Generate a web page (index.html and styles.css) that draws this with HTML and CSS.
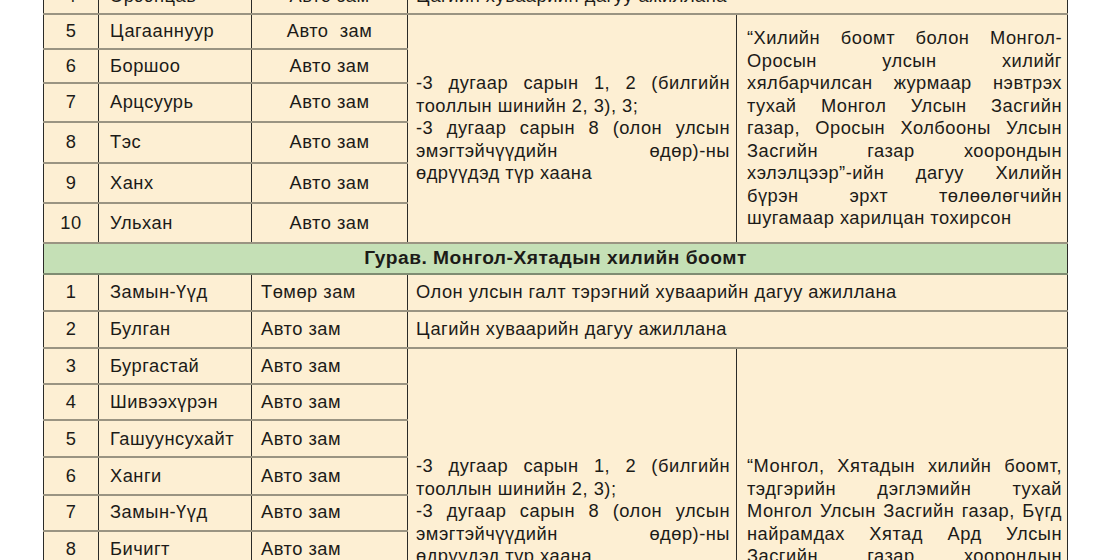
FILE: index.html
```html
<!DOCTYPE html>
<html lang="mn">
<head>
<meta charset="utf-8">
<title>Хилийн боомт</title>
<link rel="stylesheet" href="styles.css">
</head>
<body>
<div class="page">
<table class="ports">
  <colgroup>
    <col class="c-num">
    <col class="c-name">
    <col class="c-type">
    <col class="c-sched">
    <col class="c-basis">
  </colgroup>
  <tbody>
    <tr class="r35">
      <td class="num">4</td>
      <td class="name">Эрээнцав</td>
      <td class="type center">Авто зам</td>
      <td class="wide" colspan="2">Цагийн хуваарийн дагуу ажиллана</td>
    </tr>
    <tr class="r35">
      <td class="num">5</td>
      <td class="name">Цагааннуур</td>
      <td class="type center">Авто&nbsp; зам</td>
      <td class="sched" rowspan="6">
        <div class="just">-3 дугаар сарын 1, 2 (билгийн тооллын шинийн 2, 3), 3;<br>-3 дугаар сарын 8 (олон улсын эмэгтэйчүүдийн өдөр)-ны өдрүүдэд түр хаана</div>
      </td>
      <td class="basis" rowspan="6">
        <div class="just">“Хилийн боомт болон Монгол-Оросын улсын хилийг хялбарчилсан журмаар нэвтрэх тухай Монгол Улсын Засгийн газар, Оросын Холбооны Улсын Засгийн газар хоорондын хэлэлцээр”-ийн дагуу Хилийн бүрэн эрхт төлөөлөгчийн шугамаар харилцан тохирсон</div>
      </td>
    </tr>
    <tr class="r34">
      <td class="num">6</td>
      <td class="name">Боршоо</td>
      <td class="type center">Авто зам</td>
    </tr>
    <tr class="r39">
      <td class="num">7</td>
      <td class="name">Арцсуурь</td>
      <td class="type center">Авто зам</td>
    </tr>
    <tr class="r41">
      <td class="num">8</td>
      <td class="name">Тэс</td>
      <td class="type center">Авто зам</td>
    </tr>
    <tr class="r40">
      <td class="num">9</td>
      <td class="name">Ханх</td>
      <td class="type center">Авто зам</td>
    </tr>
    <tr class="r40">
      <td class="num">10</td>
      <td class="name">Ульхан</td>
      <td class="type center">Авто зам</td>
    </tr>
    <tr class="section">
      <td colspan="5">Гурав. Монгол-Хятадын хилийн боомт</td>
    </tr>
    <tr class="r37">
      <td class="num">1</td>
      <td class="name">Замын-Үүд</td>
      <td class="type">Төмөр зам</td>
      <td class="wide" colspan="2">Олон улсын галт тэрэгний хуваарийн дагуу ажиллана</td>
    </tr>
    <tr class="r37">
      <td class="num">2</td>
      <td class="name">Булган</td>
      <td class="type">Авто зам</td>
      <td class="wide" colspan="2">Цагийн хуваарийн дагуу ажиллана</td>
    </tr>
    <tr class="r36">
      <td class="num">3</td>
      <td class="name">Бургастай</td>
      <td class="type">Авто зам</td>
      <td class="sched low" rowspan="6">
        <div class="clip just">-3 дугаар сарын 1, 2 (билгийн тооллын шинийн 2, 3);<br>-3 дугаар сарын 8 (олон улсын эмэгтэйчүүдийн өдөр)-ны өдрүүдэд түр хаана</div>
      </td>
      <td class="basis low" rowspan="6">
        <div class="clip just">“Монгол, Хятадын хилийн боомт, тэдгэрийн дэглэмийн тухай Монгол&nbsp;Улсын Засгийн газар, Бүгд найрамдах Хятад Ард Улсын Засгийн газар хоорондын хэлэлцээр”-ийн дагуу Хилийн бүрэн эрхт төлөөлөгчийн шугамаар харилцан тохирсон</div>
      </td>
    </tr>
    <tr class="r36">
      <td class="num">4</td>
      <td class="name">Шивээхүрэн</td>
      <td class="type">Авто зам</td>
    </tr>
    <tr class="r37">
      <td class="num">5</td>
      <td class="name">Гашуунсухайт</td>
      <td class="type">Авто зам</td>
    </tr>
    <tr class="r37">
      <td class="num">6</td>
      <td class="name">Ханги</td>
      <td class="type">Авто зам</td>
    </tr>
    <tr class="r36">
      <td class="num">7</td>
      <td class="name">Замын-Үүд</td>
      <td class="type">Авто зам</td>
    </tr>
    <tr class="r37">
      <td class="num">8</td>
      <td class="name">Бичигт</td>
      <td class="type">Авто зам</td>
    </tr>
  </tbody>
</table>
</div>
</body>
</html>
```

FILE: styles.css
```css
html, body {
  margin: 0;
  padding: 0;
  background: #ffffff;
}

body {
  font-family: "Liberation Sans", Arial, sans-serif;
  color: #1c1b18;
  overflow: hidden;
}

.page {
  padding-left: 43px;
}

.ports {
  margin-top: -22px;
  width: 1024px;
  table-layout: fixed;
  border-collapse: collapse;
  font-size: 18.3px;
  letter-spacing: 0.5px;
  line-height: 22.5px;
  background: #fdefd3;
  border-left: 1px solid #2b2b28;
  border-right: 1px solid #2b2b28;
}

.c-num { width: 55px; }
.c-name { width: 153px; }
.c-type { width: 156px; }
.c-sched { width: 329px; }
.c-basis { width: 331px; }

.ports td {
  padding: 0;
  vertical-align: middle;
  border-top: 2px solid #9a9482;
  border-bottom: 2px solid #9a9482;
  border-left: 1px solid #2b2b28;
  border-right: 1px solid #2b2b28;
}

.r34 { height: 34px; }
.r35 { height: 35px; }
.r36 { height: 36px; }
.r37 { height: 37px; }
.r39 { height: 39px; }
.r40 { height: 40px; }
.r41 { height: 41px; }

.ports td.num {
  text-align: center;
}

.ports td.name {
  padding-left: 11px;
}

.ports td.type {
  padding-left: 9px;
}

.ports td.type.center {
  padding-left: 0;
  text-align: center;
}

.ports td.wide {
  padding-left: 8px;
}

.ports td.sched {
  padding: 0 6px 0 8px;
}

.ports td.basis {
  padding: 0 5px 0 10px;
}

.just {
  text-align: justify;
}

.ports td.low {
  vertical-align: top;
  padding-top: 106px;
}

.clip {
  height: 112px;
  overflow: hidden;
}

.section td {
  height: 29px;
  background: #c5e0b6;
  text-align: center;
  font-weight: bold;
  font-size: 19.2px;
  border-top: 2px solid #7f8c72;
  border-bottom: 2px solid #7f8c72;
}
```
